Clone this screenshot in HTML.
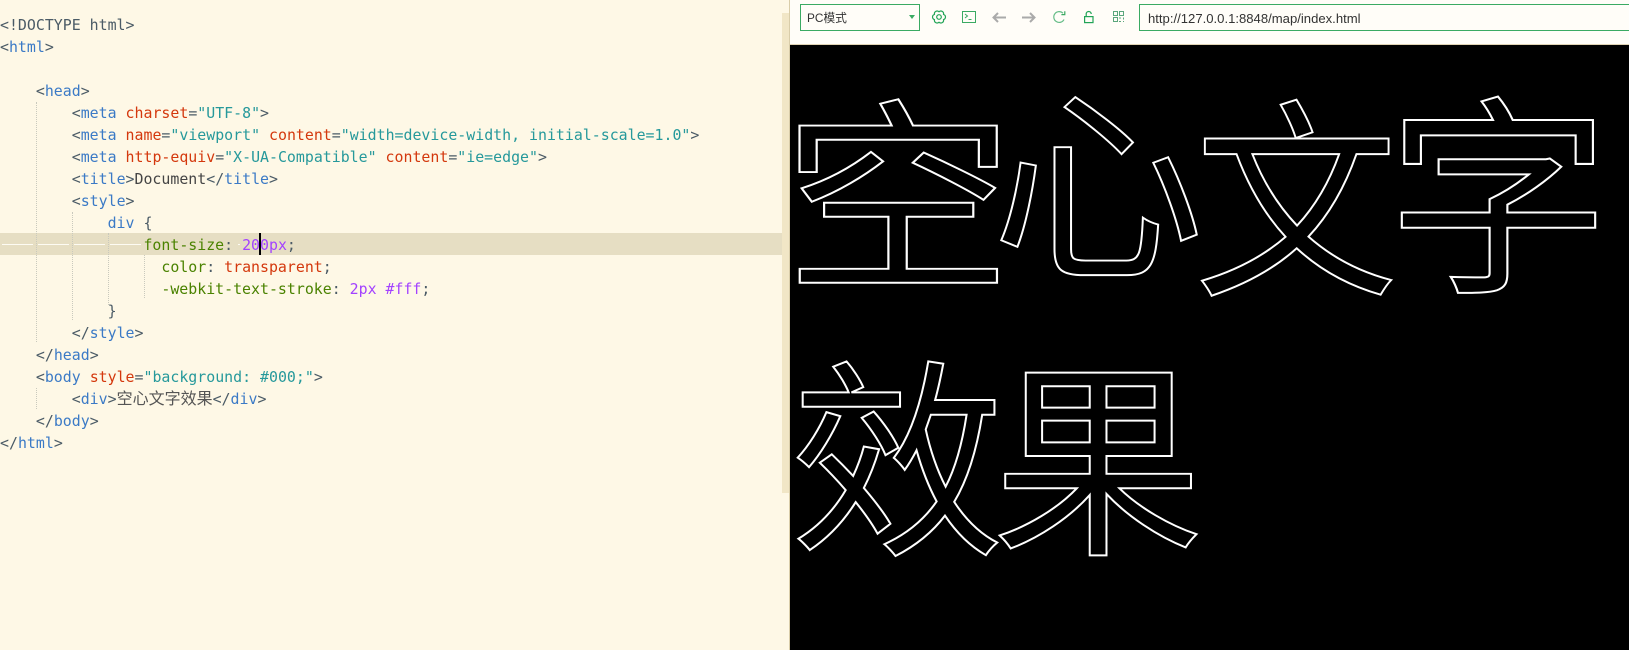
<!DOCTYPE html>
<html>
<head>
<meta charset="utf-8">
<style>
html,body{margin:0;padding:0;width:1629px;height:650px;overflow:hidden;background:#fef8e6}
#ed{position:absolute;left:0;top:0;width:789px;height:650px;background:#fef8e6;overflow:hidden}
.hl{position:absolute;left:0;top:233px;width:782px;height:22px;background:#e6dec3}
.sb{position:absolute;left:782px;top:13px;width:7px;height:480px;background:#f1e6c6}
.g{position:absolute;width:0;border-left:1px dotted #c9c9bd}
.l{position:absolute;left:0;height:22px;white-space:pre;font:14.9px/22px "DejaVu Sans Mono","Noto Sans CJK SC",monospace;color:#444;transform:translateY(1px)}
.b{color:#4b5b66}.t{color:#3b7ac6}.a{color:#d4380d}.s{color:#26999b}.c{color:#4a8200}.n{color:#a342ff}.d{color:#444}
.ws{position:absolute;top:244px;height:1px;background:#fdfbf3}
.caret{position:absolute;left:259px;top:233px;width:2px;height:22px;background:#000}
#div{position:absolute;left:789px;top:0;width:1px;height:650px;background:#d9cda9}
#tb{position:absolute;left:790px;top:0;width:839px;height:44px;background:#fffdf8;border-bottom:1px solid #e0d4b4}
#view{position:absolute;left:790px;top:45px;width:839px;height:605px;background:#000;overflow:hidden}
.bg{position:absolute;width:200px;height:262px;font:200px/262px "Noto Sans CJK SC",sans-serif;color:transparent;-webkit-text-stroke:1.9px #fff}
.box{position:absolute;top:4px;height:25px;border:1px solid #3aaa63;box-sizing:content-box;font:11.8px/27px "Liberation Sans","Noto Sans CJK SC",sans-serif;color:#333}
svg.i{position:absolute;overflow:visible}
</style>
</head>
<body>
<div id="ed">
<div class="hl"></div>
<div class="sb"></div>
<div class="g" style="left:36px;top:102px;height:240px"></div>
<div class="g" style="left:36px;top:388px;height:21px"></div>
<div class="g" style="left:72px;top:212px;height:108px"></div>
<div class="g" style="left:108px;top:233px;height:72px"></div>
<div class="g" style="left:144px;top:255px;height:43px"></div>
<div class="ws" style="left:2px;width:31px"></div>
<div class="ws" style="left:38px;width:31px"></div>
<div class="ws" style="left:74px;width:31px"></div>
<div class="ws" style="left:110px;width:31px"></div>
<div class="ws" style="left:238px;width:2px"></div>
<div class="l" style="top:13px"><span class="b">&lt;!DOCTYPE html&gt;</span></div>
<div class="l" style="top:35px"><span class="b">&lt;</span><span class="t">html</span><span class="b">&gt;</span></div>
<div class="l" style="top:79px">    <span class="b">&lt;</span><span class="t">head</span><span class="b">&gt;</span></div>
<div class="l" style="top:101px">        <span class="b">&lt;</span><span class="t">meta</span> <span class="a">charset</span><span class="b">=</span><span class="s">"UTF-8"</span><span class="b">&gt;</span></div>
<div class="l" style="top:123px">        <span class="b">&lt;</span><span class="t">meta</span> <span class="a">name</span><span class="b">=</span><span class="s">"viewport"</span> <span class="a">content</span><span class="b">=</span><span class="s">"width=device-width, initial-scale=1.0"</span><span class="b">&gt;</span></div>
<div class="l" style="top:145px">        <span class="b">&lt;</span><span class="t">meta</span> <span class="a">http-equiv</span><span class="b">=</span><span class="s">"X-UA-Compatible"</span> <span class="a">content</span><span class="b">=</span><span class="s">"ie=edge"</span><span class="b">&gt;</span></div>
<div class="l" style="top:167px">        <span class="b">&lt;</span><span class="t">title</span><span class="b">&gt;</span><span class="d">Document</span><span class="b">&lt;/</span><span class="t">title</span><span class="b">&gt;</span></div>
<div class="l" style="top:189px">        <span class="b">&lt;</span><span class="t">style</span><span class="b">&gt;</span></div>
<div class="l" style="top:211px">            <span class="t">div</span> <span class="b">{</span></div>
<div class="l" style="top:233px">                <span class="c">font-size</span><span class="b">:</span> <span class="n">200px</span><span class="b">;</span></div>
<div class="l" style="top:255px">                  <span class="c">color</span><span class="b">:</span> <span class="a">transparent</span><span class="b">;</span></div>
<div class="l" style="top:277px">                  <span class="c">-webkit-text-stroke</span><span class="b">:</span> <span class="n">2px #fff</span><span class="b">;</span></div>
<div class="l" style="top:299px">            <span class="b">}</span></div>
<div class="l" style="top:321px">        <span class="b">&lt;/</span><span class="t">style</span><span class="b">&gt;</span></div>
<div class="l" style="top:343px">    <span class="b">&lt;/</span><span class="t">head</span><span class="b">&gt;</span></div>
<div class="l" style="top:365px">    <span class="b">&lt;</span><span class="t">body</span> <span class="a">style</span><span class="b">=</span><span class="s">"background: #000;"</span><span class="b">&gt;</span></div>
<div class="l" style="top:387px">        <span class="b">&lt;</span><span class="t">div</span><span class="b">&gt;</span><span class="d" style="font-family:'Noto Sans CJK SC',sans-serif;font-size:16px;font-weight:400;line-height:0;color:#555">空心文字效果</span><span class="b">&lt;/</span><span class="t">div</span><span class="b">&gt;</span></div>
<div class="l" style="top:409px">    <span class="b">&lt;/</span><span class="t">body</span><span class="b">&gt;</span></div>
<div class="l" style="top:431px"><span class="b">&lt;/</span><span class="t">html</span><span class="b">&gt;</span></div>
<div class="caret"></div>
</div>
<div id="div"></div>
<div id="tb">
  <div class="box" style="left:10px;width:112px;padding-left:6px">PC模式</div>
  <svg class="i" style="left:119px;top:15px" width="6" height="4"><path d="M0 0H6L3 4Z" fill="#3aaa63"/></svg>
  <svg class="i" style="left:142px;top:10px" width="14" height="14" viewBox="0 0 14 14" fill="none" stroke="#22a457" stroke-width="1.2"><path d="M7 1.8A2.7 2.7 0 0 1 11.5 4.4A2.7 2.7 0 0 1 11.5 9.6A2.7 2.7 0 0 1 7 12.2A2.7 2.7 0 0 1 2.5 9.6A2.7 2.7 0 0 1 2.5 4.4A2.7 2.7 0 0 1 7 1.8Z" stroke-linejoin="round"/><circle cx="7" cy="7" r="2.3"/></svg>
  <svg class="i" style="left:172px;top:11px" width="14" height="12" viewBox="0 0 14 12" fill="none" stroke="#3aaa63" stroke-width="1"><rect x=".5" y=".5" width="13" height="11"/><path d="M3 3L5.5 5 3 7M6.5 8.5H9.5"/></svg>
  <svg class="i" style="left:202px;top:12px" width="14" height="11" viewBox="0 0 14 11" fill="none" stroke="#aaa" stroke-width="2"><path d="M14 5.5H1.5M6 1L1.5 5.5 6 10"/></svg>
  <svg class="i" style="left:232px;top:12px" width="14" height="11" viewBox="0 0 14 11" fill="none" stroke="#aaa" stroke-width="2"><path d="M0 5.5H12.5M8 1L12.5 5.5 8 10"/></svg>
  <svg class="i" style="left:263px;top:11px" width="13" height="12" viewBox="0 0 13 12" fill="none" stroke="#66bd88" stroke-width="1.2"><path d="M11 8.5A5.4 5.4 0 1 1 10 2.2"/><path d="M11.8 .3V3.6H8.4" stroke="#3aaa63"/></svg>
  <svg class="i" style="left:294px;top:11px" width="10" height="12" viewBox="0 0 10 12" fill="none" stroke="#22a457" stroke-width="1.2"><rect x=".6" y="5.6" width="8.4" height="6"/><path d="M2.2 5.5V3A2.5 2.5 0 0 1 7.2 3"/></svg>
  <svg class="i" style="left:323px;top:11px" width="11" height="11" viewBox="0 0 11 11" fill="none" stroke="#5aa67c" stroke-width="1"><rect x=".5" y=".5" width="4" height="4"/><rect x="6.5" y=".5" width="4" height="4"/><rect x=".5" y="6.5" width="4" height="4"/><path d="M6 7H8M10.5 6.5V8.5M6 10.5H8M10.5 10V11"/></svg>
  <div class="box" style="left:349px;width:483px;padding-left:8px;border-right:none;font-size:13.1px">http://127.0.0.1:8848/map/index.html</div>
</div>
<div id="view">
<span class="bg" style="left:8px;top:8px;transform-origin:100.6px 138px;transform:translate(0,0) scale(1.16,1.029)">空</span>
<span class="bg" style="left:208px;top:8px;transform-origin:100.6px 147.5px;transform:translate(0,-10.5px) scale(1.06,1.027)">心</span>
<span class="bg" style="left:408px;top:8px;transform-origin:100.7px 140.8px;transform:translate(-1.7px,3.6px) scale(1.016,1.06)">文</span>
<span class="bg" style="left:608px;top:8px;transform-origin:100px 141.3px;transform:translate(.6px,.5px) scale(1.123,1.06)">字</span>
<span class="bg" style="left:8px;top:270px;transform-origin:100.7px 142px;transform:translate(-.7px,1.5px) scale(1.07,1.053)">效</span>
<span class="bg" style="left:208px;top:270px;transform-origin:100px 147.3px;transform:translate(0,2.2px) scale(1.059,1.048)">果</span>
</div>
</body>
</html>
